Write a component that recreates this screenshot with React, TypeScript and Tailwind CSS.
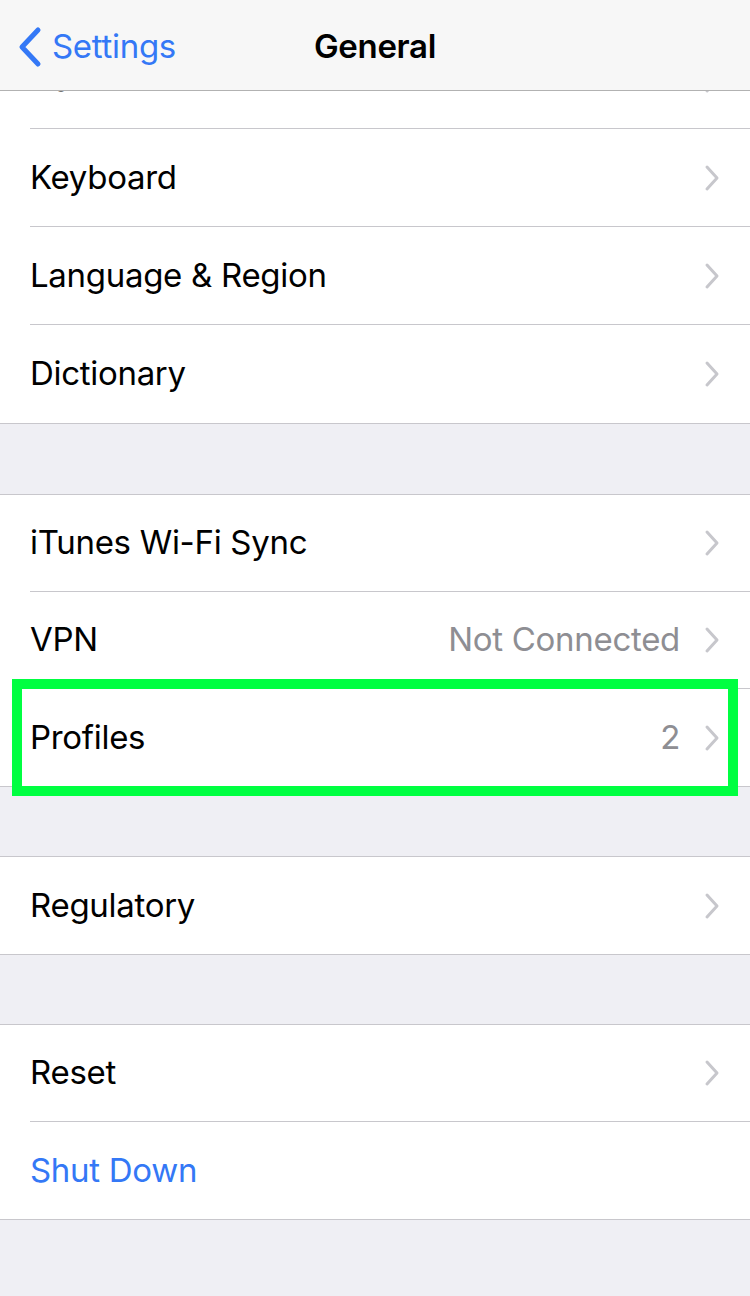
import React from 'react';

type Row = { label: string; value?: string; blue?: boolean; chevron?: boolean; highlight?: boolean };

const Chevron = () => (
  <svg width="16" height="28" viewBox="0 0 16 28" className="shrink-0">
    <path d="M3 3 L13 14 L3 25" fill="none" stroke="#c7c7cc" strokeWidth="3" strokeLinecap="round" strokeLinejoin="round" />
  </svg>
);

const Group = ({ rows, first, tall }: { rows: Row[]; first?: boolean; tall?: boolean }) => (
  <div className={`bg-white ${first ? '' : 'border-t'} border-b border-[#c8c7cc]`}>
    {rows.map((r, i) => (
      <div key={r.label} className="relative pl-[30px]">
        <div
          className={`flex items-center ${tall ? 'h-[98px]' : 'h-[97px]'} pr-[30px] ${
            i < rows.length - 1 ? 'border-b border-[#c8c7cc]' : ''
          }`}
        >
          <span className={`flex-1 text-[33px] tracking-[-0.3px] ${r.blue ? 'text-[#3478f6]' : 'text-black'}`}>
            {r.label}
          </span>
          {r.value && <span className="text-[33px] tracking-[-0.3px] text-[#8e8e93] mr-[24px]">{r.value}</span>}
          {r.chevron !== false && <Chevron />}
        </div>
        {r.highlight && (
          <div className="absolute left-[12px] right-[12px] top-[-10px] bottom-[-10px] border-[10px] border-[#00ff41] pointer-events-none" />
        )}
      </div>
    ))}
  </div>
);

export default function App() {
  return (
    <div
      className="relative w-[750px] h-[1296px] overflow-hidden bg-[#efeff4]"
      style={{ fontFamily: 'Inter, "Noto Sans", sans-serif' }}
    >
      <div className="pt-[31px]">
        <Group
          first
          tall
          rows={[
            { label: 'Date & Time' },
            { label: 'Keyboard' },
            { label: 'Language & Region' },
            { label: 'Dictionary' },
          ]}
        />
        <div className="h-[70px]" />
        <Group
          rows={[
            { label: 'iTunes Wi-Fi Sync' },
            { label: 'VPN', value: 'Not Connected' },
            { label: 'Profiles', value: '2', highlight: true },
          ]}
        />
        <div className="h-[69px]" />
        <Group rows={[{ label: 'Regulatory' }]} />
        <div className="h-[69px]" />
        <Group
          rows={[
            { label: 'Reset' },
            { label: 'Shut Down', blue: true, chevron: false },
          ]}
        />
      </div>

      {/* nav bar */}
      <div className="absolute top-0 left-0 right-0 h-[91px] bg-[#f7f7f7] border-b border-[#b2b2b2] flex items-center pt-[4px]">
        <div className="flex items-center pl-[17px]">
          <svg width="26" height="42" viewBox="0 0 26 42">
            <path d="M21 4 L5 21 L21 38" fill="none" stroke="#3478f6" strokeWidth="5" strokeLinecap="round" strokeLinejoin="round" />
          </svg>
          <span className="text-[33px] tracking-[-0.3px] ml-[9px] text-[#3478f6]">Settings</span>
        </div>
        <div className="absolute left-1/2 -translate-x-1/2 text-[33px] font-semibold tracking-[-0.3px] text-black pointer-events-none">
          General
        </div>
      </div>
    </div>
  );
}
